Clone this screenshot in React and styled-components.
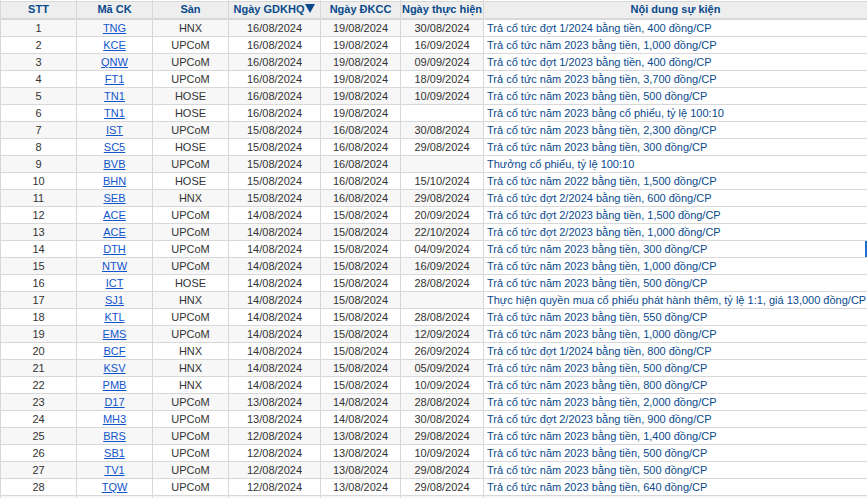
import React from 'react';
import styled, { createGlobalStyle } from 'styled-components';

const GlobalStyle = createGlobalStyle`
    html, body {
        margin: 0;
        padding: 0;
        background: #fff;
        overflow: hidden;
    }
`;

const Table = styled.table`
    border-collapse: collapse;
    table-layout: fixed;
    width: 867px;
    font-family: "Liberation Sans", Arial, sans-serif;
    font-size: 11px;
    color: #333;
`;

// sliver of the row scrolled off above the header
const TopCell = styled.td`
    height: 1px;
    padding: 0;
    font-size: 0;
    line-height: 0;
    border-left: 1px solid #d8d8d8;
    border-right: 1px solid #d8d8d8;
`;

const HeadCell = styled.th`
    height: 14px;
    padding: 0 0 2px;
    background: #eeeeee;
    border: 1px solid #d8d8d8;
    border-bottom-width: 2px;
    color: #0a4a8c;
    font-size: 11px;
    font-weight: bold;
    text-align: center;
    white-space: nowrap;
`;

const SortArrow = styled.span`
    display: inline-block;
    margin-left: 1px;
    border-left: 5px solid transparent;
    border-right: 5px solid transparent;
    border-top: 9px solid #0a4a8c;
`;

const Row = styled.tr`
    background: ${({ $odd }) => ($odd ? '#f7f7f7' : '#fff')};
`;

const Cell = styled.td`
    height: 16px;
    padding: 0;
    border: 1px solid #d8d8d8;
    text-align: center;
    white-space: nowrap;
`;

const Symbol = styled.a`
    color: #1155cc;
    text-decoration: underline;
`;

const EventCell = styled.td`
    height: 16px;
    padding: 0 0 0 3px;
    border: 1px solid #d8d8d8;
    background: #fff;
    box-shadow: ${({ $marked }) => ($marked ? 'inset -2px 0 0 #1a6fd0' : 'none')};
    color: #0a4a8c;
    text-align: left;
    white-space: nowrap;
    overflow: hidden;
`;

const columns = [76, 76, 76, 92, 80, 83, 384];
const headers = ['STT', 'Mã CK', 'Sàn', 'Ngày GDKHQ', 'Ngày ĐKCC', 'Ngày thực hiện', 'Nội dung sự kiện'];

const rows = [
    ['TNG', 'HNX', '16/08/2024', '19/08/2024', '30/08/2024', 'Trả cổ tức đợt 1/2024 bằng tiền, 400 đồng/CP'],
    ['KCE', 'UPCoM', '16/08/2024', '19/08/2024', '16/09/2024', 'Trả cổ tức năm 2023 bằng tiền, 1,000 đồng/CP'],
    ['QNW', 'UPCoM', '16/08/2024', '19/08/2024', '09/09/2024', 'Trả cổ tức đợt 1/2023 bằng tiền, 400 đồng/CP'],
    ['FT1', 'UPCoM', '16/08/2024', '19/08/2024', '18/09/2024', 'Trả cổ tức năm 2023 bằng tiền, 3,700 đồng/CP'],
    ['TN1', 'HOSE', '16/08/2024', '19/08/2024', '10/09/2024', 'Trả cổ tức năm 2023 bằng tiền, 500 đồng/CP'],
    ['TN1', 'HOSE', '16/08/2024', '19/08/2024', '', 'Trả cổ tức năm 2023 bằng cổ phiếu, tỷ lệ 100:10'],
    ['IST', 'UPCoM', '15/08/2024', '16/08/2024', '30/08/2024', 'Trả cổ tức năm 2023 bằng tiền, 2,300 đồng/CP'],
    ['SC5', 'HOSE', '15/08/2024', '16/08/2024', '29/08/2024', 'Trả cổ tức năm 2023 bằng tiền, 300 đồng/CP'],
    ['BVB', 'UPCoM', '15/08/2024', '16/08/2024', '', 'Thưởng cổ phiếu, tỷ lệ 100:10'],
    ['BHN', 'HOSE', '15/08/2024', '16/08/2024', '15/10/2024', 'Trả cổ tức năm 2022 bằng tiền, 1,500 đồng/CP'],
    ['SEB', 'HNX', '15/08/2024', '16/08/2024', '29/08/2024', 'Trả cổ tức đợt 2/2024 bằng tiền, 600 đồng/CP'],
    ['ACE', 'UPCoM', '14/08/2024', '15/08/2024', '20/09/2024', 'Trả cổ tức đợt 2/2023 bằng tiền, 1,500 đồng/CP'],
    ['ACE', 'UPCoM', '14/08/2024', '15/08/2024', '22/10/2024', 'Trả cổ tức đợt 2/2023 bằng tiền, 1,000 đồng/CP'],
    ['DTH', 'UPCoM', '14/08/2024', '15/08/2024', '04/09/2024', 'Trả cổ tức năm 2023 bằng tiền, 300 đồng/CP'],
    ['NTW', 'UPCoM', '14/08/2024', '15/08/2024', '16/09/2024', 'Trả cổ tức năm 2023 bằng tiền, 1,000 đồng/CP'],
    ['ICT', 'HOSE', '14/08/2024', '15/08/2024', '28/08/2024', 'Trả cổ tức năm 2023 bằng tiền, 500 đồng/CP'],
    ['SJ1', 'HNX', '14/08/2024', '15/08/2024', '', 'Thực hiện quyền mua cổ phiếu phát hành thêm, tỷ lệ 1:1, giá 13,000 đồng/CP'],
    ['KTL', 'UPCoM', '14/08/2024', '15/08/2024', '28/08/2024', 'Trả cổ tức năm 2023 bằng tiền, 550 đồng/CP'],
    ['EMS', 'UPCoM', '14/08/2024', '15/08/2024', '12/09/2024', 'Trả cổ tức năm 2023 bằng tiền, 1,000 đồng/CP'],
    ['BCF', 'HNX', '14/08/2024', '15/08/2024', '26/09/2024', 'Trả cổ tức đợt 1/2024 bằng tiền, 800 đồng/CP'],
    ['KSV', 'HNX', '14/08/2024', '15/08/2024', '05/09/2024', 'Trả cổ tức năm 2023 bằng tiền, 500 đồng/CP'],
    ['PMB', 'HNX', '14/08/2024', '15/08/2024', '10/09/2024', 'Trả cổ tức năm 2023 bằng tiền, 800 đồng/CP'],
    ['D17', 'UPCoM', '13/08/2024', '14/08/2024', '28/08/2024', 'Trả cổ tức năm 2023 bằng tiền, 2,000 đồng/CP'],
    ['MH3', 'UPCoM', '13/08/2024', '14/08/2024', '30/08/2024', 'Trả cổ tức đợt 2/2023 bằng tiền, 900 đồng/CP'],
    ['BRS', 'UPCoM', '12/08/2024', '13/08/2024', '29/08/2024', 'Trả cổ tức năm 2023 bằng tiền, 1,400 đồng/CP'],
    ['SB1', 'UPCoM', '12/08/2024', '13/08/2024', '10/09/2024', 'Trả cổ tức năm 2023 bằng tiền, 500 đồng/CP'],
    ['TV1', 'UPCoM', '12/08/2024', '13/08/2024', '29/08/2024', 'Trả cổ tức năm 2023 bằng tiền, 500 đồng/CP'],
    ['TQW', 'UPCoM', '12/08/2024', '13/08/2024', '29/08/2024', 'Trả cổ tức năm 2023 bằng tiền, 640 đồng/CP'],
];

export default function App() {
    return (
        <>
            <GlobalStyle />
            <Table>
                <colgroup>
                    {columns.map((width, i) => <col key={i} width={width} />)}
                </colgroup>
                <thead>
                    <tr>
                        {columns.map((width, i) => <TopCell key={i} />)}
                    </tr>
                    <tr>
                        {headers.map((label, i) => (
                            <HeadCell key={label}>
                                {label}
                                {i === 3 && <SortArrow />}
                            </HeadCell>
                        ))}
                    </tr>
                </thead>
                <tbody>
                    {rows.map((row, i) => (
                        <Row key={i} $odd={i % 2 === 0}>
                            <Cell>{i + 1}</Cell>
                            <Cell><Symbol href="#">{row[0]}</Symbol></Cell>
                            <Cell>{row[1]}</Cell>
                            <Cell>{row[2]}</Cell>
                            <Cell>{row[3]}</Cell>
                            <Cell>{row[4]}</Cell>
                            <EventCell $marked={i === 13}>{row[5]}</EventCell>
                        </Row>
                    ))}
                    {/* next row is cut off by the bottom of the window */}
                    <Row $odd>
                        {columns.map((width, i) => <Cell key={i} />)}
                    </Row>
                </tbody>
            </Table>
        </>
    );
}
